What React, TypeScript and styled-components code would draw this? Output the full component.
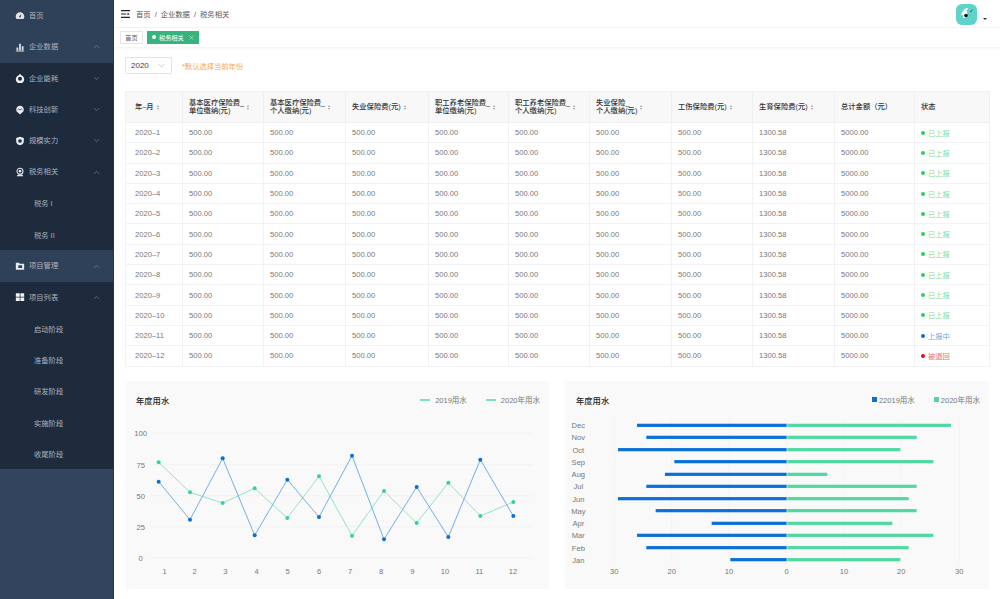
import { ReactNode } from "react";
import styled, { createGlobalStyle } from "styled-components";
import { ChevronDown, ChevronUp, X } from "lucide-react";

const FONT = `"Liberation Sans", "Noto Sans CJK SC", sans-serif`;
const BLUE = "#0a6fd6";
const GREEN = "#4fd8a0";

const GlobalStyle = createGlobalStyle`
  html, body { margin: 0; padding: 0; background: #fff; }
  body { font-family: ${FONT}; }
  * { box-sizing: border-box; }
`;

const gaugeIcon = (
  <path d="M6 1.5a5.2 5.2 0 0 0-5.2 5.2c0 1.300.4 2.300 1.100 3h8.200c.7-.7 1.100-1.700 1.100-3A5.200 5.200 0 0 0 6 1.500zm0 6.300a1 1 0 0 1-.7-1.700l2.600-2-1.200 3a1 1 0 0 1-.7.7z" fill="#dfe4ea" fillRule="evenodd" />
);
const barsIcon = (
  <path d="M1 10.600h10v.9H1zM1.800 6.500h2v3.600h-2zM4.900 2h2.100v8.100H4.900zM8.100 5h2.100v5.100H8.100z" fill="#dfe4ea" />
);
const dropIcon = (
  <path d="M6 .8l1.500 1.900A5 5 0 1 1 4.500 2.700zM6 4.600a2.400 2.400 0 1 0 0 4.800 2.400 2.400 0 0 0 0-4.800z" fill="#f1f3f6" fillRule="evenodd" />
);
const bubbleIcon = (
  <>
    <path d="M6 .8a4.600 4.600 0 0 1 2.200 8.600L6 11.400 3.800 9.400A4.600 4.600 0 0 1 6 .8z" fill="#e8ebef" />
    <path d="M3 5.800l1.500-1 1.400 1.400 1.500-1.700 1.600 1.200" fill="none" stroke="#1e2b3d" strokeWidth="0.8" />
  </>
);
const shieldIcon = (
  <path d="M6 .8l4.600 1.600v3.800c0 2.500-2 4.300-4.600 5-2.600-.7-4.600-2.500-4.600-5V2.400zM6 3.800a2.200 2.200 0 1 0 0 4.400 2.200 2.200 0 0 0 0-4.400z" fill="#e8ebef" fillRule="evenodd" />
);
const taxIcon = (
  <>
    <circle cx="6" cy="5" r="3.600" fill="none" stroke="#dfe4ea" strokeWidth="1.300" />
    <circle cx="6" cy="5" r="1.600" fill="#dfe4ea" />
    <path d="M2 11c.6-1.500 2.200-2.200 4-2.200s3.400.7 4 2.200z" fill="#dfe4ea" />
  </>
);
const folderIcon = (
  <path d="M1 2h3.800l1 1.300H11v7.200H1zM4 5v3.500h4.500V5z" fill="#e8ebef" fillRule="evenodd" />
);
const gridIcon = (
  <path d="M1 1.500h4.700v4.200H1zM6.500 1.500H11v4.200H6.500zM1 6.500h4.700v4.200H1zM6.500 6.500H11v4.200H6.500z" fill="#f1f3f6" />
);

type MenuEntry = {
  label: string;
  icon?: ReactNode;
  open?: boolean;
  light?: boolean;
  children?: string[];
};

const menu: MenuEntry[] = [
  { label: "首页", icon: gaugeIcon, light: true },
  { label: "企业数据", icon: barsIcon, open: true, light: true },
  { label: "企业能耗", icon: dropIcon, open: false },
  { label: "科技创新", icon: bubbleIcon, open: false },
  { label: "规模实力", icon: shieldIcon, open: false },
  { label: "税务相关", icon: taxIcon, open: true, children: ["税务 I", "税务 II"] },
  { label: "项目管理", icon: folderIcon, open: true, light: true },
  {
    label: "项目列表",
    icon: gridIcon,
    open: true,
    children: ["启动阶段", "准备阶段", "研发阶段", "实施阶段", "收尾阶段"],
  },
];

const columns = [
  { title: ["年–月"], width: 57, sort: true },
  { title: ["基本医疗保险费_", "单位缴纳(元)"], width: 81, sort: true },
  { title: ["基本医疗保险费_", "个人缴纳(元)"], width: 82, sort: true },
  { title: ["失业保险费(元)"], width: 83, sort: true },
  { title: ["职工养老保险费_", "单位缴纳(元)"], width: 80, sort: true },
  { title: ["职工养老保险费_", "个人缴纳(元)"], width: 81, sort: true },
  { title: ["失业保险_", "个人缴纳(元)"], width: 82, sort: true },
  { title: ["工伤保险费(元)"], width: 81, sort: true },
  { title: ["生育保险费(元)"], width: 82, sort: true },
  { title: ["总计金额（元）"], width: 80, sort: false },
  { title: ["状态"], width: 75, sort: false },
];

type Status = "done" | "going" | "back";
const statusInfo: Record<Status, { text: string; color: string; dot: string }> = {
  done: { text: "已上报", color: "#7fdc95", dot: "#2fce5b" },
  going: { text: "上报中", color: "#6ea6e6", dot: "#0a6fd6" },
  back: { text: "被退回", color: "#ee6a78", dot: "#e00b1c" },
};

const months = Array.from({ length: 12 }, (_, i) => i + 1);

const blueLine = [305, 419, 235, 466, 299, 411, 227, 478, 321, 471, 239, 408];
const greenLine = [247, 337, 369, 325, 414, 289, 467, 333, 429, 308, 408, 366];
const lineX = [116, 210, 308, 404, 502, 597, 696, 792, 890, 985, 1081, 1180];
const lineLabelX = [134, 224, 316, 410, 503, 597, 690, 783, 877, 975, 1078, 1179];
const gridRows = [
  { label: "100", y: 160 },
  { label: "75", y: 254 },
  { label: "50", y: 347 },
  { label: "25", y: 440 },
  { label: "0", y: 535 },
];

// zoomed reference coords -> card coords
const cx = (v: number) => v / 3 - 5;
const cy = (v: number) => v / 3 - 1;

const bars = [
  { m: "Dec", y: 136, l: 231, r: 1173 },
  { m: "Nov", y: 172, l: 259, r: 1070 },
  { m: "Oct", y: 209, l: 174, r: 1021 },
  { m: "Sep", y: 245, l: 343, r: 1120 },
  { m: "Aug", y: 283, l: 315, r: 802 },
  { m: "Jul", y: 319, l: 259, r: 1070 },
  { m: "Jun", y: 356, l: 174, r: 1046 },
  { m: "May", y: 392, l: 287, r: 1070 },
  { m: "Apr", y: 430, l: 455, r: 997 },
  { m: "Mar", y: 466, l: 231, r: 1120 },
  { m: "Feb", y: 503, l: 259, r: 1046 },
  { m: "Jan", y: 539, l: 511, r: 1021 },
];
const barTicks = [
  { label: "30", x: 163 },
  { label: "20", x: 335 },
  { label: "10", x: 507 },
  { label: "0", x: 680 },
  { label: "10", x: 852 },
  { label: "20", x: 1024 },
  { label: "30", x: 1198 },
];

function LineChart() {
  const pts = (ys: number[]) => ys.map((y, i) => `${cx(lineX[i])},${cy(y)}`).join(" ");
  return (
    <ChartSvg viewBox="0 38 424 170">
      {gridRows.map((g) => (
        <g key={g.label}>
          <line x1={cx(92)} x2={cx(1238)} y1={cy(g.y)} y2={cy(g.y)} stroke="#f0f0f0" strokeWidth="0.7" />
          <AxisText x={cx(62)} y={cy(g.y) + 3} textAnchor="middle">{g.label}</AxisText>
        </g>
      ))}
      {months.map((m, i) => (
        <AxisText key={m} x={cx(lineLabelX[i])} y={cy(574) + 3} textAnchor="middle">{m}</AxisText>
      ))}
      <polyline points={pts(greenLine)} fill="none" stroke="#93e3c3" strokeWidth="1" />
      <polyline points={pts(blueLine)} fill="none" stroke="#74aee6" strokeWidth="1" />
      {greenLine.map((y, i) => (
        <circle key={i} cx={cx(lineX[i])} cy={cy(y)} r="2" fill="#38d09a" />
      ))}
      {blueLine.map((y, i) => (
        <circle key={i} cx={cx(lineX[i])} cy={cy(y)} r="2" fill={BLUE} />
      ))}
    </ChartSvg>
  );
}

function BarChart() {
  return (
    <ChartSvg viewBox="0 38 424 170">
      {barTicks.map((t, i) => (
        <g key={i}>
          <line x1={cx(t.x)} x2={cx(t.x)} y1={cy(112)} y2={cy(552)} stroke="#f2f2f2" strokeWidth="0.7" />
          <AxisText x={cx(t.x)} y={cy(574) + 3} textAnchor="middle">{t.label}</AxisText>
        </g>
      ))}
      {bars.map((b) => (
        <g key={b.m}>
          <AxisText x={cx(55)} y={cy(b.y) + 3} textAnchor="middle">{b.m}</AxisText>
          <rect x={cx(b.l)} y={cy(b.y) - 1.6} width={(680 - b.l) / 3} height="3.2" fill={BLUE} />
          <rect x={cx(682)} y={cy(b.y) - 1.6} width={(b.r - 682) / 3} height="3.2" fill={GREEN} />
        </g>
      ))}
    </ChartSvg>
  );
}

function MenuRow({ entry }: { entry: MenuEntry }) {
  return (
    <>
      <MenuItem $light={entry.light}>
        <MenuIcon viewBox="0 0 12 12">{entry.icon}</MenuIcon>
        <MenuLabel>{entry.label}</MenuLabel>
        {entry.open === true && <ChevronUp size={9} strokeWidth={1.5} />}
        {entry.open === false && <ChevronDown size={9} strokeWidth={1.5} />}
      </MenuItem>
      {entry.children?.map((c) => <SubItem key={c}>{c}</SubItem>)}
    </>
  );
}

function TableRow({ month }: { month: number }) {
  const status: Status = month === 11 ? "going" : month === 12 ? "back" : "done";
  const info = statusInfo[status];
  const values = ["500.00", "500.00", "500.00", "500.00", "500.00", "500.00", "500.00", "1300.58", "5000.00"];
  return (
    <tr>
      <Td>{`2020–${month}`}</Td>
      {values.map((v, i) => (
        <Td key={i}>{v}</Td>
      ))}
      <Td>
        <StatusCell $color={info.color}>
          <StatusDot $color={info.dot} />
          {info.text}
        </StatusCell>
      </Td>
    </tr>
  );
}

export default function App() {
  return (
    <Page>
      <GlobalStyle />
      <Sidebar>
        <Menu>
          {menu.map((m) => (
            <MenuRow key={m.label} entry={m} />
          ))}
        </Menu>
      </Sidebar>
      <Main>
        <TopBar>
          <FoldIcon viewBox="0 0 10 9">
            <path d="M0 0h10v1.400H0zM0 3.800h6v1.400H0zM0 7.600h10V9H0zM7.300 3l2.500 1.500L7.300 6z" fill="#222" />
          </FoldIcon>
          <Crumbs>首页&nbsp;&nbsp;/&nbsp;&nbsp;企业数据&nbsp;&nbsp;/&nbsp;&nbsp;税务相关</Crumbs>
          <Avatar>
            <svg viewBox="0 0 21 21" width="21" height="21">
              <path d="M7 7c1.500-2.500 3.500-3 5-3l-1.500 3 1 3-2 3.500-2.500.5 .5-2.500L5 10.500z" fill="#fff" />
              <circle cx="10" cy="11.500" r="1.800" fill="#111" />
              <path d="M14 8l2.500-2" stroke="#1b5f5a" strokeWidth="1" />
            </svg>
          </Avatar>
          <Caret />
        </TopBar>
        <TagBar>
          <Tag>首页</Tag>
          <ActiveTag>
            <TagDot />
            税务相关
            <X size={7} strokeWidth={1.5} />
          </ActiveTag>
        </TagBar>
        <Content>
          <FilterRow>
            <YearSelect>
              2020
              <ChevronDown size={11} strokeWidth={1} />
            </YearSelect>
            <Hint>*默认选择当前年份</Hint>
          </FilterRow>
          <Table>
            <colgroup>
              {columns.map((c, i) => (
                <col key={i} style={{ width: c.width }} />
              ))}
            </colgroup>
            <thead>
              <tr>
                {columns.map((c, i) => (
                  <Th key={i}>
                    <ThInner>
                      <span>
                        {c.title.map((t) => (
                          <ThLine key={t}>{t}</ThLine>
                        ))}
                      </span>
                      {c.sort && <SortMark />}
                    </ThInner>
                  </Th>
                ))}
              </tr>
            </thead>
            <tbody>
              {months.map((m) => (
                <TableRow key={m} month={m} />
              ))}
            </tbody>
          </Table>
          <Charts>
            <ChartCard>
              <ChartHead>
                <ChartTitle>年度用水</ChartTitle>
                <Legend>
                  <LegendItem>
                    <LegendLine />
                    2019用水
                  </LegendItem>
                  <LegendItem>
                    <LegendLine />
                    2020年用水
                  </LegendItem>
                </Legend>
              </ChartHead>
              <LineChart />
            </ChartCard>
            <ChartCard>
              <ChartHead>
                <ChartTitle>年度用水</ChartTitle>
                <Legend>
                  <LegendItem>
                    <LegendSquare $color={BLUE} />
                    22019用水
                  </LegendItem>
                  <LegendItem>
                    <LegendSquare $color={GREEN} />
                    2020年用水
                  </LegendItem>
                </Legend>
              </ChartHead>
              <BarChart />
            </ChartCard>
          </Charts>
        </Content>
      </Main>
    </Page>
  );
}

const Page = styled.div`
  display: flex;
  width: 1000px;
  height: 599px;
  overflow: hidden;
  background: #fff;
`;

const Sidebar = styled.aside`
  flex: 0 0 114px;
  height: 100%;
  background: #33455e;
  border-right: 1px solid #26354a;
`;

const Menu = styled.nav`
  display: flex;
  flex-direction: column;
  background: #1e2b3d;
`;

const MenuItem = styled.div<{ $light?: boolean }>`
  display: flex;
  align-items: center;
  height: 31.3px;
  padding: 0 12px 0 15px;
  background: ${(p) => (p.$light ? "#2f4059" : "transparent")};
  color: #a9b3c0;

  svg:last-child:not(:first-child) {
    color: #8793a3;
  }
`;

const MenuIcon = styled.svg`
  flex: 0 0 10px;
  width: 10px;
  height: 10px;
  margin-right: 4px;
`;

const MenuLabel = styled.span`
  flex: 1;
  font-size: 7.3px;
  line-height: 1;
`;

const SubItem = styled.div`
  display: flex;
  align-items: center;
  height: 31.3px;
  padding-left: 34px;
  font-size: 7.3px;
  color: #a9b3c0;
`;

const Main = styled.main`
  flex: 1;
  min-width: 0;
  display: flex;
  flex-direction: column;
`;

const TopBar = styled.header`
  display: flex;
  align-items: center;
  height: 28px;
  padding: 0 13px 0 7px;
  border-bottom: 1px solid #f4f4f4;
`;

const FoldIcon = styled.svg`
  width: 9px;
  height: 8px;
  margin-right: 6px;
`;

const Crumbs = styled.div`
  flex: 1;
  font-size: 7.3px;
  color: #555;
`;

const Avatar = styled.div`
  width: 21px;
  height: 21px;
  border-radius: 6px;
  background: #5dd3c9;
  margin-top: 1px;
`;

const Caret = styled.span`
  width: 0;
  height: 0;
  margin: 10px 0 0 6px;
  border-left: 2px solid transparent;
  border-right: 2px solid transparent;
  border-top: 2px solid #333;
`;

const TagBar = styled.div`
  display: flex;
  align-items: center;
  gap: 4px;
  height: 19px;
  padding: 0 0 1px 6px;
  box-shadow: 0 1px 2px rgba(0, 0, 0, 0.06);
`;

const Tag = styled.span`
  display: flex;
  align-items: center;
  justify-content: center;
  width: 23px;
  height: 13px;
  border: 1px solid #e6e6e6;
  font-size: 6.2px;
  color: #555;
`;

const ActiveTag = styled.span`
  display: flex;
  align-items: center;
  width: 52px;
  height: 13px;
  padding: 0 4px 0 5px;
  background: #37b47e;
  color: #fff;
  font-size: 6.2px;

  svg {
    margin-left: auto;
  }
`;

const TagDot = styled.i`
  width: 4px;
  height: 4px;
  margin-right: 3px;
  border-radius: 50%;
  background: #fff;
`;

const Content = styled.div`
  flex: 1;
  padding: 10px 11px 0 11px;
`;

const FilterRow = styled.div`
  display: flex;
  align-items: center;
  gap: 10px;
  height: 17px;
  margin-bottom: 17px;
`;

const YearSelect = styled.div`
  display: flex;
  align-items: center;
  justify-content: space-between;
  width: 47px;
  height: 17px;
  padding: 0 4px 0 5px;
  border: 1px solid #e3e3e3;
  border-radius: 2px;
  font-size: 8px;
  color: #444;

  svg {
    color: #999;
  }
`;

const Hint = styled.span`
  font-size: 7.3px;
  color: #f7a84a;
`;

const Table = styled.table`
  width: 864px;
  table-layout: fixed;
  border-collapse: collapse;
  border: 1px solid #f2f2f5;
`;

const Th = styled.th`
  height: 31px;
  padding: 0 0 0 6px;
  background: #f8f8f9;
  border: 1px solid #f0f0f3;
  text-align: left;
  font-size: 7.3px;
  font-weight: 500;
  color: #333;

  &:first-child {
    padding-left: 9px;
  }
`;

const ThInner = styled.div`
  display: flex;
  align-items: center;
  gap: 3px;
`;

const ThLine = styled.span`
  display: block;
  line-height: 8.5px;
  white-space: nowrap;
`;

const SortMark = styled.i`
  display: flex;
  flex-direction: column;
  gap: 1px;

  &::before,
  &::after {
    content: "";
    width: 0;
    height: 0;
    border-left: 1.5px solid transparent;
    border-right: 1.5px solid transparent;
  }

  &::before {
    border-bottom: 2px solid #999;
  }

  &::after {
    border-top: 2px solid #999;
  }
`;

const Td = styled.td`
  height: 20.3px;
  padding: 0 0 0 6px;
  border: 1px solid #f2f2f5;
  font-size: 7.6px;
  color: #777;

  &:first-child {
    padding-left: 9px;
  }
`;

const StatusCell = styled.span<{ $color: string }>`
  display: flex;
  align-items: center;
  gap: 3px;
  color: ${(p) => p.$color};
  font-size: 7.3px;
`;

const StatusDot = styled.i<{ $color: string }>`
  width: 4px;
  height: 4px;
  border-radius: 50%;
  background: ${(p) => p.$color};
`;

const Charts = styled.div`
  display: grid;
  grid-template-columns: 424px 424px;
  gap: 16px;
  margin-top: 14px;
`;

const ChartCard = styled.section`
  height: 208px;
  background: #f9f9f9;
`;

const ChartHead = styled.div`
  display: flex;
  align-items: center;
  justify-content: space-between;
  height: 38px;
  padding: 0 9px 0 11px;
`;

const ChartTitle = styled.h3`
  margin: 0;
  font-size: 8.3px;
  font-weight: 500;
  color: #222;
`;

const Legend = styled.div`
  display: flex;
  gap: 19px;
`;

const LegendItem = styled.span`
  display: flex;
  align-items: center;
  gap: 5px;
  font-size: 7.5px;
  color: #777;
`;

const LegendLine = styled.i`
  flex: 0 0 10px;
  height: 2px;
  background: #7fe0bc;
`;

const LegendSquare = styled.i<{ $color: string }>`
  flex: 0 0 5px;
  height: 5px;
  margin-right: -3px;
  background: ${(p) => p.$color};
`;

const ChartSvg = styled.svg`
  display: block;
  width: 424px;
  height: 170px;
`;

const AxisText = styled.text`
  font-family: ${FONT};
  font-size: 7.6px;
  fill: #777;
`;
